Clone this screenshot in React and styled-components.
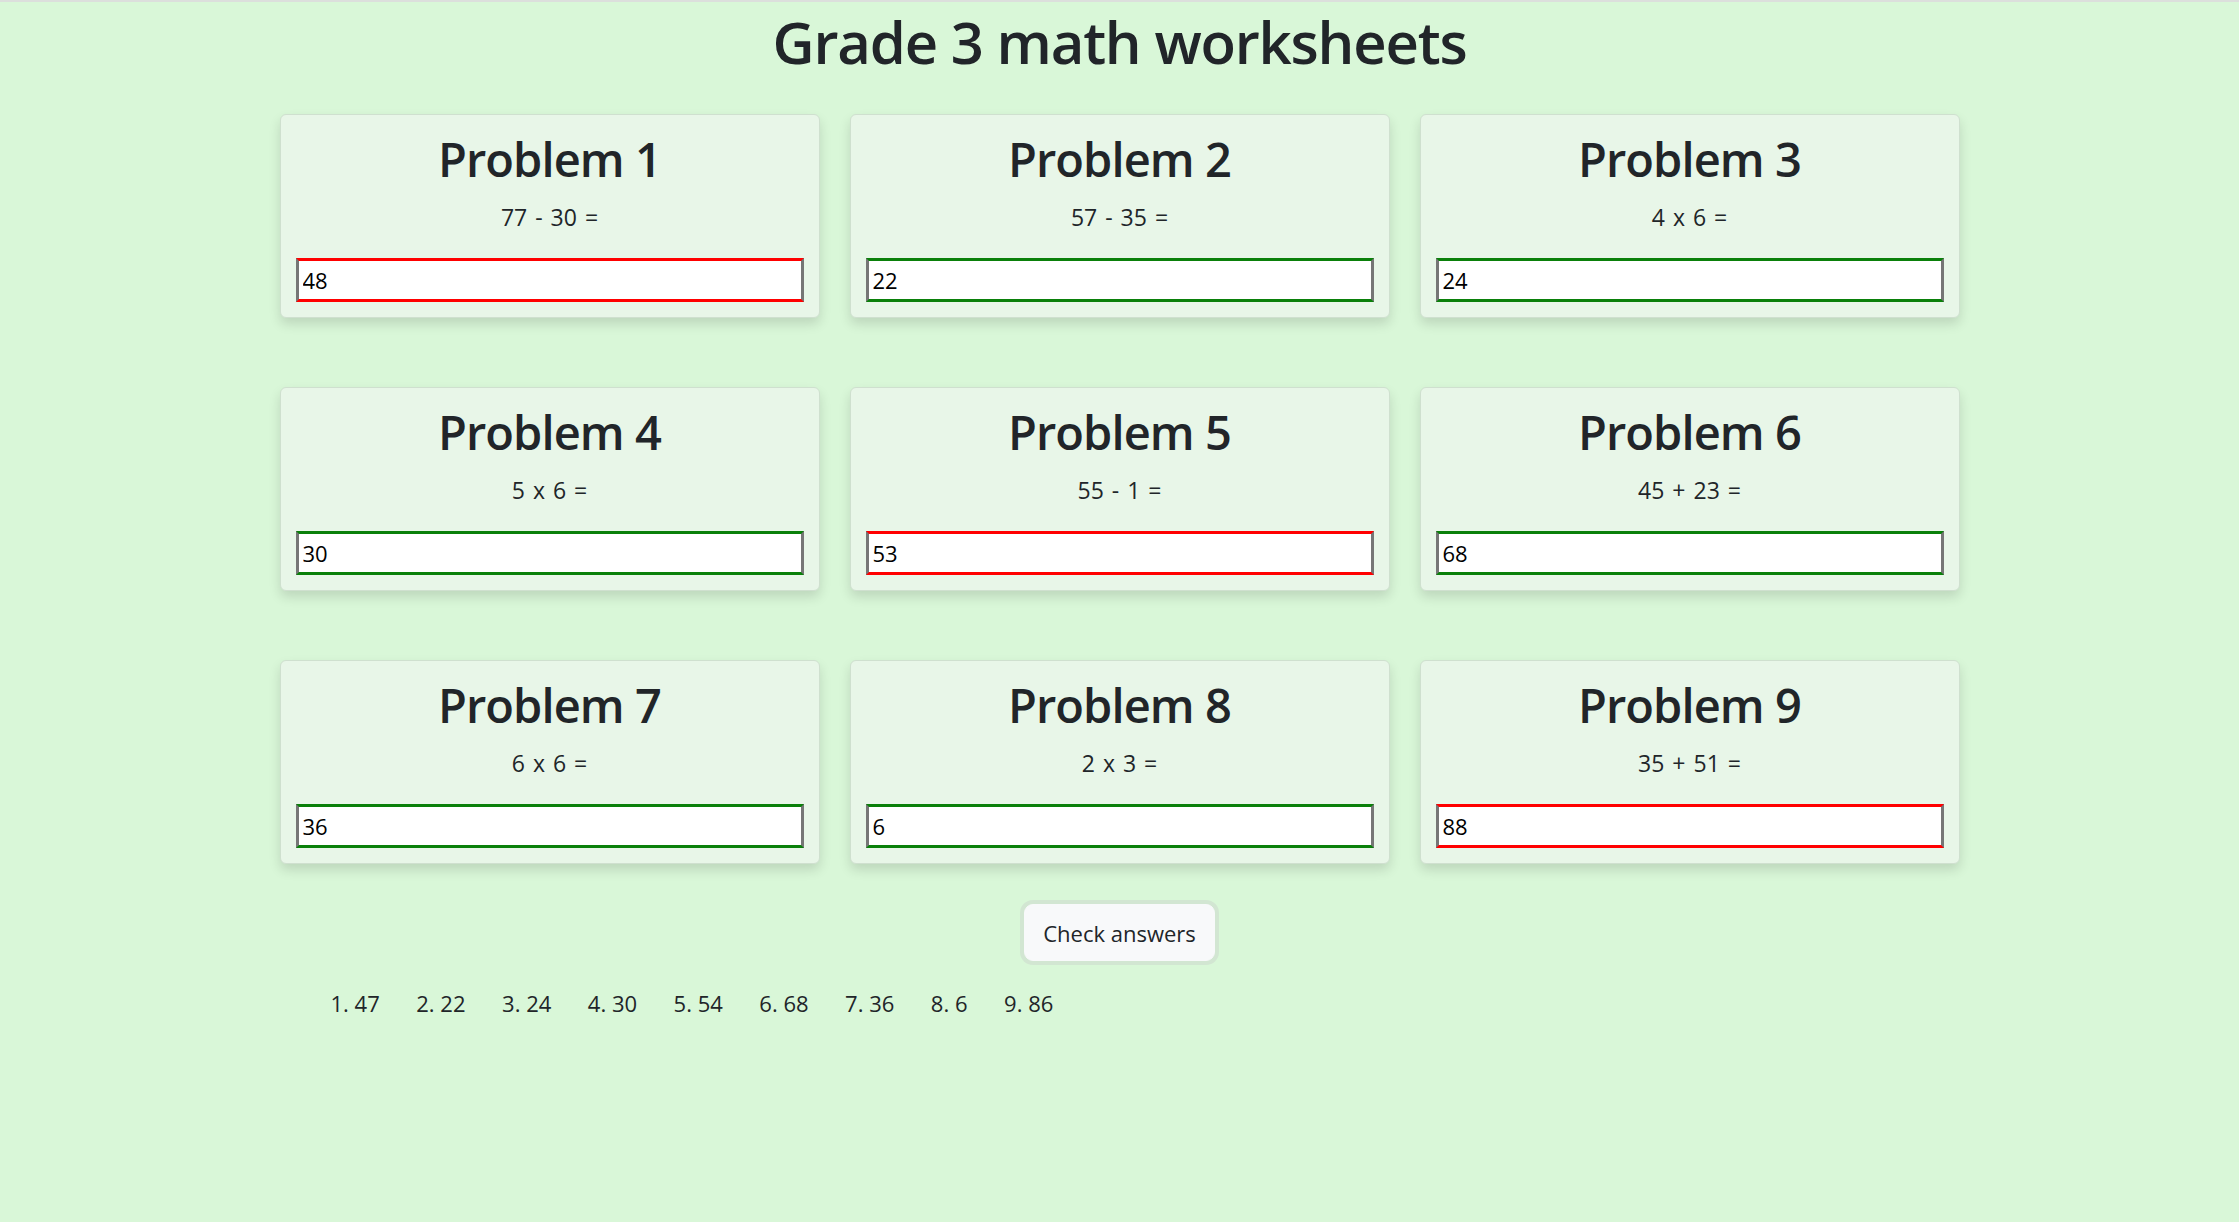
import styled, { createGlobalStyle } from "styled-components";

const GlobalStyle = createGlobalStyle`
  html, body {
    margin: 0;
    padding: 0;
    background: #d9f7d8;
  }
  body {
    font-family: "Open Sans", "Noto Sans", sans-serif;
    color: #212529;
    border-top: 2px solid #dcdfdc;
  }
`;

const problems = [
  { q: "77 - 30 =", value: "48", ok: false },
  { q: "57 - 35 =", value: "22", ok: true },
  { q: "4 x 6 =", value: "24", ok: true },
  { q: "5 x 6 =", value: "30", ok: true },
  { q: "55 - 1 =", value: "53", ok: false },
  { q: "45 + 23 =", value: "68", ok: true },
  { q: "6 x 6 =", value: "36", ok: true },
  { q: "2 x 3 =", value: "6", ok: true },
  { q: "35 + 51 =", value: "88", ok: false },
];

const answers = ["47", "22", "24", "30", "54", "68", "36", "6", "86"];

const Page = styled.main`
  display: flex;
  flex-direction: column;
  align-items: center;
  min-height: 1220px;
`;

const Title = styled.h1`
  margin: -3px 0 0;
  font-size: 58px;
  font-weight: 600;
  line-height: 86px;
  letter-spacing: -1.2px;
`;

const Grid = styled.section`
  width: 1680px;
  margin-top: 29px;
  display: grid;
  grid-template-columns: repeat(3, 1fr);
  column-gap: 30px;
  row-gap: 69px;
`;

const Card = styled.div`
  display: flex;
  flex-direction: column;
  align-items: stretch;
  height: 204px;
  box-sizing: border-box;
  padding: 0 15px 15px;
  background: #e8f6e8;
  border: 1px solid #cfe0cf;
  border-radius: 6px;
  box-shadow: 0 6px 12px rgba(0, 0, 0, 0.13);
`;

const CardTitle = styled.h2`
  margin: 14px 0 0;
  font-size: 47px;
  font-weight: 600;
  line-height: 60px;
  text-align: center;
  letter-spacing: -0.9px;
`;

const Equation = styled.p`
  margin: 12px 0 0;
  font-size: 23px;
  line-height: 32px;
  text-align: center;
  word-spacing: 2px;
`;

const AnswerInput = styled.input`
  margin-top: auto;
  height: 44px;
  box-sizing: border-box;
  padding: 0 4px;
  font-family: "Open Sans", "Noto Sans", sans-serif;
  font-size: 22px;
  color: #000;
  background: #fff;
  border: 3px solid ${(p) => (p.$ok ? "#0a800a" : "#ff0000")};
  border-left-color: #767676;
  border-right-color: #767676;
  outline: none;
`;

const CheckButton = styled.button`
  margin-top: 40px;
  height: 57px;
  padding: 0 18px;
  font-family: "Open Sans", "Noto Sans", sans-serif;
  font-size: 22px;
  color: #212529;
  background: #f8f9fa;
  border: 1px solid #f8f9fa;
  border-radius: 9px;
  box-shadow: 0 0 0 4px #d2e6d2;
`;

const AnswerList = styled.div`
  width: 1680px;
  margin: 26px auto 0;
  padding-left: 51px;
  box-sizing: border-box;
  display: flex;
  gap: 36.5px;
  font-size: 22px;
  line-height: 32px;
`;

export default function App() {
  return (
    <>
      <GlobalStyle />
      <Page>
        <Title>Grade 3 math worksheets</Title>
        <Grid>
          {problems.map((p, i) => (
            <Card key={i}>
              <CardTitle>Problem {i + 1}</CardTitle>
              <Equation>{p.q}</Equation>
              <AnswerInput $ok={p.ok} defaultValue={p.value} />
            </Card>
          ))}
        </Grid>
        <CheckButton>Check answers</CheckButton>
        <AnswerList>
          {answers.map((a, i) => (
            <span key={i}>
              {i + 1}. {a}
            </span>
          ))}
        </AnswerList>
      </Page>
    </>
  );
}
